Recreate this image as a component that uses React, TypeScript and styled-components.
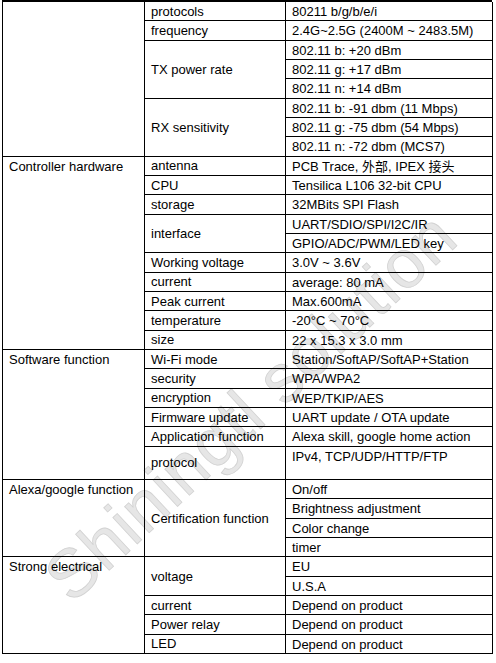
import React from 'react';
import styled, { createGlobalStyle } from 'styled-components';

const GlobalStyle = createGlobalStyle`
  html, body {
    margin: 0;
    padding: 0;
    background: #ffffff;
  }
  body {
    font-family: "Liberation Sans", Arial, "Noto Sans CJK SC", sans-serif;
    color: #000000;
  }
`;

const ROW_H = 19.33;
const TALL_H = 33.5;
const TALL_ROW = 24; // protocol row (1-based)

// Wrapper keeps the watermark behind the table
const Page = styled.div`
  position: relative;
  width: 496px;
  height: 663px;
  overflow: hidden;
`;

const Watermark = styled.div`
  position: absolute;
  left: 250px;
  top: 406px;
  transform: translate(-50%, -50%) rotate(-43deg);
  font-family: "Liberation Sans", Arial, sans-serif;
  font-size: 68px;
  letter-spacing: 1px;
  white-space: nowrap;
  color: #e6e6e6;
  -webkit-text-stroke: 0.8px #d2d2d2;
  pointer-events: none;
  z-index: 0;
`;

const SpecGrid = styled.div`
  position: relative;
  z-index: 1;
  margin-left: 2px;
  width: 490px;
  display: grid;
  grid-template-columns: 142px 141px 207px;
  grid-template-rows: ${Array.from({ length: 33 }, (_, i) =>
    `${i + 1 === TALL_ROW ? TALL_H : ROW_H}px`
  ).join(' ')};
  border-top: 2px solid #000;
  border-left: 1px solid #000;
  box-sizing: border-box;
`;

const Cell = styled.div<{ $col: number; $row: number; $span: number; $align: 'top' | 'center' }>`
  grid-column: ${p => p.$col};
  grid-row: ${p => `${p.$row} / span ${p.$span}`};
  display: flex;
  align-items: ${p => (p.$align === 'center' ? 'center' : 'flex-start')};
  padding: ${p => (p.$align === 'center' ? '0 6px' : '1px 6px 0')};
  border-right: 1px solid #000;
  border-bottom: 1px solid #000;
  font-size: 13px;
  line-height: 17px;
  white-space: nowrap;
  overflow: hidden;
  box-sizing: border-box;
`;

const sections = [
  { label: '', span: 8 },
  { label: 'Controller hardware', span: 10 },
  { label: 'Software function', span: 6 },
  { label: 'Alexa/google function', span: 4 },
  { label: 'Strong electrical', span: 5 },
];

const items: { name: string; values: string[] }[] = [
  { name: 'protocols', values: ['80211 b/g/b/e/i'] },
  { name: 'frequency', values: ['2.4G~2.5G (2400M ~ 2483.5M)'] },
  { name: 'TX power rate', values: ['802.11 b: +20 dBm', '802.11 g: +17 dBm', '802.11 n: +14 dBm'] },
  {
    name: 'RX sensitivity',
    values: ['802.11 b: -91 dbm (11 Mbps)', '802.11 g: -75 dbm (54 Mbps)', '802.11 n: -72 dbm (MCS7)'],
  },
  { name: 'antenna', values: ['PCB Trace, 外部, IPEX  接头'] },
  { name: 'CPU', values: ['Tensilica L106 32-bit CPU'] },
  { name: 'storage', values: ['32MBits SPI Flash'] },
  { name: 'interface', values: ['UART/SDIO/SPI/I2C/IR', 'GPIO/ADC/PWM/LED key'] },
  { name: 'Working voltage', values: ['3.0V ~ 3.6V'] },
  { name: 'current', values: ['average: 80 mA'] },
  { name: 'Peak current', values: ['Max.600mA'] },
  { name: 'temperature', values: ['-20°C ~ 70°C'] },
  { name: 'size', values: ['22 x 15.3 x 3.0 mm'] },
  { name: 'Wi-Fi mode', values: ['Station/SoftAP/SoftAP+Station'] },
  { name: 'security', values: ['WPA/WPA2'] },
  { name: 'encryption', values: ['WEP/TKIP/AES'] },
  { name: 'Firmware update', values: ['UART update / OTA update'] },
  { name: 'Application function', values: ['Alexa skill, google home action'] },
  { name: 'protocol', values: ['IPv4, TCP/UDP/HTTP/FTP'] },
  {
    name: 'Certification function',
    values: ['On/off', 'Brightness adjustment', 'Color change', 'timer'],
  },
  { name: 'voltage', values: ['EU', 'U.S.A'] },
  { name: 'current', values: ['Depend on product'] },
  { name: 'Power relay', values: ['Depend on product'] },
  { name: 'LED', values: ['Depend on product'] },
];

const App: React.FC = () => {
  const cells: React.ReactNode[] = [];

  let row = 1;
  sections.forEach((s, i) => {
    cells.push(
      <Cell key={`s${i}`} $col={1} $row={row} $span={s.span} $align="top">
        {s.label}
      </Cell>
    );
    row += s.span;
  });

  row = 1;
  items.forEach((item, i) => {
    cells.push(
      <Cell key={`n${i}`} $col={2} $row={row} $span={item.values.length} $align="center">
        {item.name}
      </Cell>
    );
    item.values.forEach((v, j) => {
      cells.push(
        <Cell key={`v${i}-${j}`} $col={3} $row={row + j} $span={1} $align="top">
          {v}
        </Cell>
      );
    });
    row += item.values.length;
  });

  return (
    <>
      <GlobalStyle />
      <Page>
        <Watermark>Shiningtl solution</Watermark>
        <SpecGrid>{cells}</SpecGrid>
      </Page>
    </>
  );
};

export default App;
